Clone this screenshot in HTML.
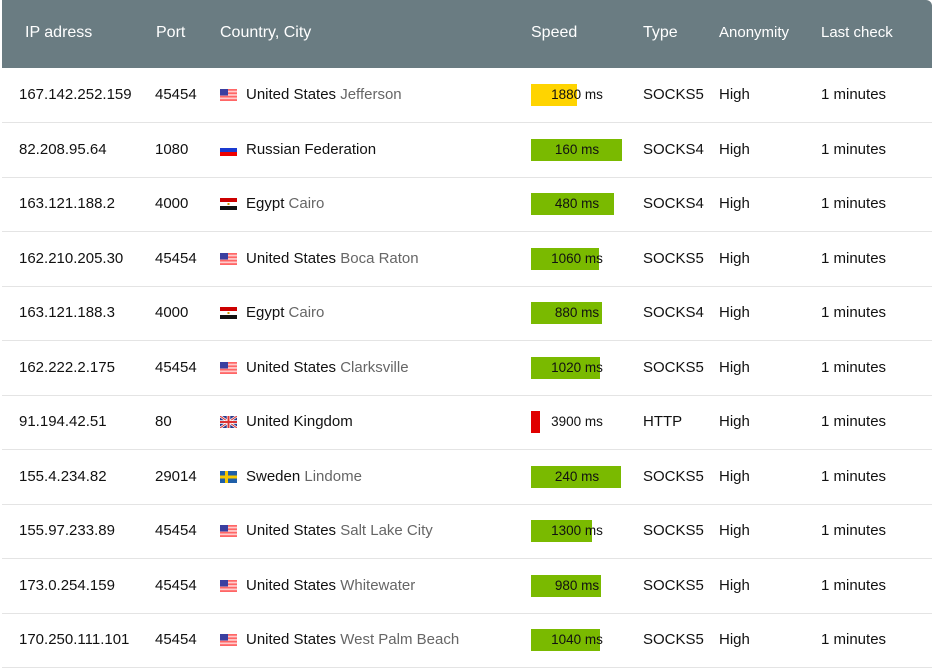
<!DOCTYPE html>
<html><head><meta charset="utf-8"><style>
body{margin:0;background:#fff;width:938px;height:672px;overflow:hidden;font-family:"Liberation Sans",sans-serif;}
.hdr{position:absolute;left:2px;top:0;width:930px;height:68px;background:#6a7c82;border-top-right-radius:6px;color:#fff;font-size:16px;}
.hdr span{position:absolute;top:24px;}
.row{position:absolute;left:2px;width:930px;height:54px;border-bottom:1px solid #e4e4e4;font-size:15px;color:#111;}
.row span{position:absolute;top:18px;white-space:nowrap;}
.city{color:#666;}
.flag{position:absolute;top:21px;left:218px;width:17px;height:12px;}
.bar{position:absolute;left:529px;top:16px;height:22px;}
.sp{position:absolute;left:529px;top:19px;width:92px;text-align:center;font-size:13.5px;}
</style></head><body>
<div class="hdr"><span style="left:23px">IP adress</span><span style="left:154px">Port</span><span style="left:218px">Country, City</span><span style="left:529px">Speed</span><span style="left:641px">Type</span><span style="left:717px;font-size:15px">Anonymity</span><span style="left:819px;font-size:15px">Last check</span></div>
<div id="rows"></div>
<script>
const d=[
["167.142.252.159","45454","us","United States","Jefferson",1880,46,"#ffd400","SOCKS5"],
["82.208.95.64","1080","ru","Russian Federation","",160,91,"#7aba00","SOCKS4"],
["163.121.188.2","4000","eg","Egypt","Cairo",480,83,"#7aba00","SOCKS4"],
["162.210.205.30","45454","us","United States","Boca Raton",1060,68,"#7aba00","SOCKS5"],
["163.121.188.3","4000","eg","Egypt","Cairo",880,71,"#7aba00","SOCKS4"],
["162.222.2.175","45454","us","United States","Clarksville",1020,69,"#7aba00","SOCKS5"],
["91.194.42.51","80","gb","United Kingdom","",3900,9,"#e00000","HTTP"],
["155.4.234.82","29014","se","Sweden","Lindome",240,90,"#7aba00","SOCKS5"],
["155.97.233.89","45454","us","United States","Salt Lake City",1300,61,"#7aba00","SOCKS5"],
["173.0.254.159","45454","us","United States","Whitewater",980,70,"#7aba00","SOCKS5"],
["170.250.111.101","45454","us","United States","West Palm Beach",1040,69,"#7aba00","SOCKS5"]];
const flags={
us:'<svg class="flag" viewBox="0 0 17 12"><rect width="17" height="12" fill="#f66"/><g fill="#fcc"><rect y="1.7" width="17" height="1.7"/><rect y="5.1" width="17" height="1.7"/><rect y="8.5" width="17" height="1.7"/></g><rect width="8" height="6.5" fill="#3b3fa0"/></svg>',
ru:'<svg class="flag" viewBox="0 0 17 12"><rect width="17" height="4" fill="#fff"/><rect y="4" width="17" height="4" fill="#1a3ad0"/><rect y="8" width="17" height="4" fill="#e00"/></svg>',
eg:'<svg class="flag" viewBox="0 0 17 12"><rect width="17" height="4" fill="#c00"/><rect y="4" width="17" height="4" fill="#fff"/><rect y="8" width="17" height="4" fill="#111"/><rect x="7.5" y="5" width="2" height="2" fill="#c90"/></svg>',
gb:'<svg class="flag" viewBox="0 0 17 12"><rect width="17" height="12" fill="#2a3a8c"/><path d="M0 0L17 12M17 0L0 12" stroke="#fff" stroke-width="2.5"/><path d="M0 0L17 12M17 0L0 12" stroke="#d33" stroke-width="1"/><path d="M8.5 0V12M0 6H17" stroke="#fff" stroke-width="3.5"/><path d="M8.5 0V12M0 6H17" stroke="#d33" stroke-width="2"/></svg>',
se:'<svg class="flag" viewBox="0 0 17 12"><rect width="17" height="12" fill="#1f5fa8"/><rect x="5" width="3" height="12" fill="#f5c800"/><rect y="4.5" width="17" height="3" fill="#f5c800"/></svg>'};
let h='';
d.forEach((r,i)=>{const t=68+i*54.5;
h+=`<div class="row" style="top:${t}px"><span style="left:17px">${r[0]}</span><span style="left:153px">${r[1]}</span>${flags[r[2]]}<span style="left:244px">${r[3]} <span class="city" style="position:static">${r[4]}</span></span><div class="bar" style="width:${r[6]}px;background:${r[7]}"></div><div class="sp">${r[5]} ms</div><span style="left:641px">${r[8]}</span><span style="left:717px">High</span><span style="left:819px">1 minutes</span></div>`;});
document.getElementById('rows').innerHTML=h;
</script>
</body></html>
